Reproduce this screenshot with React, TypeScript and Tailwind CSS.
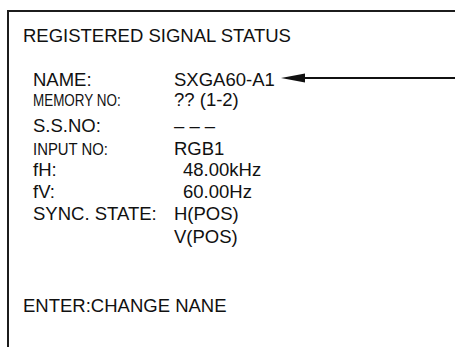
type Row = { label: string; value: string; h: string; narrow?: string; indent?: boolean };

const rows: Row[] = [
  { label: "NAME:", value: "SXGA60-A1", h: "h-[20px]" },
  { label: "MEMORY NO:", value: "?? (1-2)", h: "h-[26px]", narrow: "scale-x-[0.84]" },
  { label: "S.S.NO:", value: "– – –", h: "h-[22.5px]" },
  { label: "INPUT NO:", value: "RGB1", h: "h-[21.5px]", narrow: "scale-x-[0.93]" },
  { label: "fH:", value: "48.00kHz", h: "h-[21.5px]", indent: true },
  { label: "fV:", value: "60.00Hz", h: "h-[22px]", indent: true },
  { label: "SYNC. STATE:", value: "H(POS)", h: "h-[23.5px]" },
  { label: "", value: "V(POS)", h: "h-[21px]" },
];

export default function App() {
  return (
    <div
      className="w-[455px] h-[347px] bg-white overflow-hidden pl-[7px] pt-[10px] text-[#111]"
      style={{ fontFamily: '"Liberation Sans", Arial, sans-serif' }}
    >
      <div className="w-[470px] h-[360px] border-l-2 border-t-2 border-[#1c1c1c] pl-[14px] pt-[12.6px]">
        <div className="text-[18.5px] leading-[21px]">REGISTERED SIGNAL STATUS</div>
        <div className="mt-[23.5px] pl-[10px]">
          {rows.map((r, i) => (
            <div key={i} className={`flex items-baseline text-[18.5px] leading-[21px] ${r.h}`}>
              <div className="w-[141px] shrink-0">
                {r.narrow ? (
                  <span className={`inline-block text-[16px] origin-left ${r.narrow}`}>{r.label}</span>
                ) : (
                  r.label
                )}
              </div>
              <div className={r.indent ? "pl-[9px]" : ""}>{r.value}</div>
              {i === 0 && (
                <div className="flex items-center self-start mt-[4px] ml-[6px] grow h-[10px]">
                  <svg width="24" height="10" viewBox="0 0 24 10" className="shrink-0">
                    <polygon points="0,5 24,0.5 24,9.5" fill="#111" />
                  </svg>
                  <div className="h-[2.5px] grow bg-[#111]" />
                </div>
              )}
            </div>
          ))}
        </div>
        <div className="mt-[48px] text-[18.5px] leading-[21px]">ENTER:CHANGE NANE</div>
      </div>
    </div>
  );
}
